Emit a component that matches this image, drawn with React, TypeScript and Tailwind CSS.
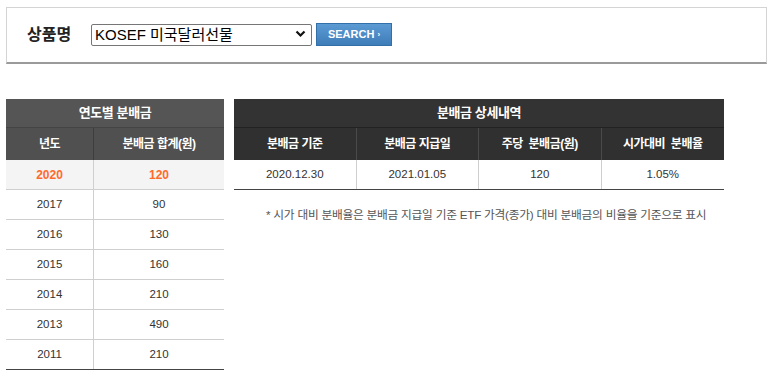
import { useState } from "react";

const yearly = [
  { year: "2020", amount: "120", active: true },
  { year: "2017", amount: "90" },
  { year: "2016", amount: "130" },
  { year: "2015", amount: "160" },
  { year: "2014", amount: "210" },
  { year: "2013", amount: "490" },
  { year: "2011", amount: "210" },
];

const detailHeads = ["분배금 기준", "분배금 지급일", "주당  분배금(원)", "시가대비  분배율"];
const detailRow = ["2020.12.30", "2021.01.05", "120", "1.05%"];

const font = "font-['Liberation_Sans','Noto_Sans_CJK_KR',sans-serif]";

export default function App() {
  const [fund, setFund] = useState("KOSEF 미국달러선물");

  return (
    <div className={`w-[773px] h-[377px] bg-white overflow-hidden pt-[7px] ${font}`}>
      {/* Search box */}
      <div className="ml-[6px] w-[761px] h-[57px] border border-[#d4d4d4] border-b-2 border-b-[#9a9a9a] flex items-center pl-[20px] pb-[1px]">
        <span className="text-[16px] font-bold text-[#222] w-[64px]">상품명</span>
        <div className="relative">
          <select
            value={fund}
            onChange={(e) => setFund(e.target.value)}
            className="appearance-none w-[221px] h-[22px] border border-[#767676] rounded-[2px] pl-[3px] text-[15px] leading-[20px] text-black bg-white"
          >
            <option>KOSEF 미국달러선물</option>
            <option>KOSEF 200</option>
          </select>
          <svg
            className="absolute right-[6px] top-[7px] pointer-events-none"
            width="11"
            height="8"
            viewBox="0 0 11 8"
          >
            <path d="M1.5 1.5 L5.5 5.5 L9.5 1.5" stroke="#111" strokeWidth="2.2" fill="none" />
          </svg>
        </div>
        <button className="ml-[4px] w-[76px] h-[23px] border border-[#336fa8] bg-gradient-to-b from-[#5b9ad3] to-[#3f7db9] text-white text-[11px] font-bold flex items-center justify-center gap-[3px] font-['Liberation_Sans',sans-serif]">
          SEARCH
          <span className="text-[8px] leading-none">›</span>
        </button>
      </div>

      {/* Tables */}
      <div className="flex gap-[10px] mt-[35px] ml-[6px]">
        {/* Yearly */}
        <div className="w-[218px]">
          <div className="h-[29px] bg-[#555] text-white text-[13px] font-bold flex items-center justify-center border-b border-b-[#444] tracking-[-0.03em]">
            연도별 분배금
          </div>
          <div className="h-[32px] bg-[#505050] text-white text-[12px] font-bold flex tracking-[-0.04em]">
            <div className="w-[88px] flex items-center justify-center border-r border-r-[#3e3e3e]">년도</div>
            <div className="flex-1 flex items-center justify-center">분배금 합계(원)</div>
          </div>
          {yearly.map((r, i) => (
            <div
              key={r.year}
              className={`h-[30px] flex text-[11.5px] border-b ${
                i === yearly.length - 1 ? "border-b-[#444]" : "border-b-[#cfcfcf]"
              } ${r.active ? "bg-[#f4f4f4] text-[#ff6a2c] font-bold text-[12px]" : "text-[#333]"}`}
            >
              <div className="w-[88px] flex items-center justify-center border-r border-r-[#cfcfcf]">{r.year}</div>
              <div className="flex-1 flex items-center justify-center">{r.amount}</div>
            </div>
          ))}
        </div>

        {/* Detail */}
        <div className="w-[490px]">
          <div className="h-[29px] bg-[#333] text-white text-[13px] font-bold flex items-center justify-center border-b border-b-[#222] tracking-[-0.03em]">
            분배금 상세내역
          </div>
          <div className="h-[32px] bg-[#303030] text-white text-[12px] font-bold grid grid-cols-4 tracking-[-0.04em]">
            {detailHeads.map((h, i) => (
              <div
                key={h}
                className={`flex items-center justify-center whitespace-pre ${i < 3 ? "border-r border-r-[#4a4a4a]" : ""}`}
              >
                {h}
              </div>
            ))}
          </div>
          <div className="h-[30px] grid grid-cols-4 border-b border-b-[#444] text-[11.5px] text-[#333]">
            {detailRow.map((d, i) => (
              <div
                key={i}
                className={`flex items-center justify-center ${i < 3 ? "border-r border-r-[#cfcfcf]" : ""}`}
              >
                {d}
              </div>
            ))}
          </div>
          <p className="mt-[16px] ml-[32px] text-[11.7px] text-[#555] tracking-[-0.02em] whitespace-nowrap">
            * 시가 대비 분배율은 분배금 지급일 기준 ETF 가격(종가) 대비 분배금의 비율을 기준으로 표시
          </p>
        </div>
      </div>
    </div>
  );
}
